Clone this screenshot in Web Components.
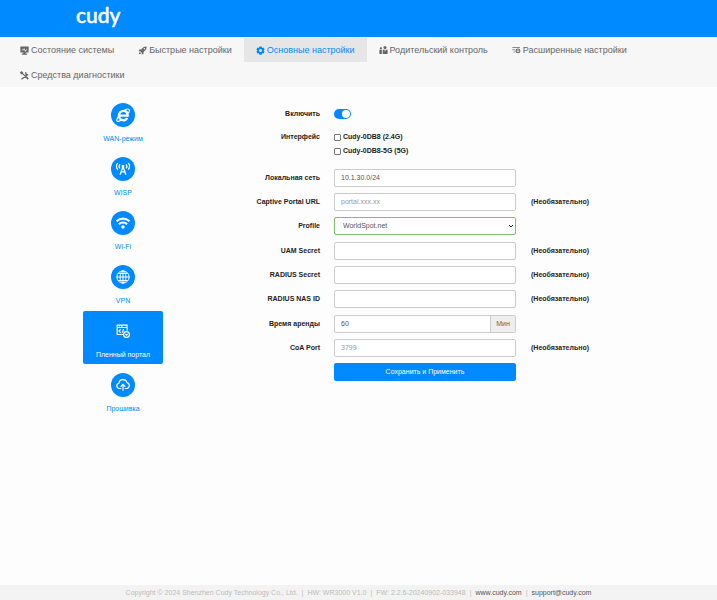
<!DOCTYPE html>
<html lang="ru">
<head>
<meta charset="utf-8">
<title>Cudy</title>
<style>
html { height: 100%; }
body { margin: 0; min-height: 100%; display: flex; flex-direction: column; background: #fdfdfd; color: #333; font: 7px/10px "Liberation Sans", Arial, sans-serif; --brand: #008aff; }
main { flex: 1; display: flex; box-sizing: border-box; width: 100%; max-width: 565px; margin: 0 auto; padding-top: 8px; }
settings-form { flex: 1; min-width: 0; }
</style>
</head>
<body>
<top-bar></top-bar>
<main-nav>
  <nav-item icon="monitor">Состояние системы</nav-item>
  <nav-item icon="rocket">Быстрые настройки</nav-item>
  <nav-item icon="gear" active>Основные настройки</nav-item>
  <nav-item icon="family">Родительский контроль</nav-item>
  <nav-item icon="advanced">Расширенные настройки</nav-item>
  <nav-item icon="tools">Средства диагностики</nav-item>
</main-nav>
<main>
  <side-menu>
    <side-item icon="browser">WAN-режим</side-item>
    <side-item icon="antenna">WISP</side-item>
    <side-item icon="wifi">Wi-Fi</side-item>
    <side-item icon="globe">VPN</side-item>
    <side-item icon="portal" active>Пленный портал</side-item>
    <side-item icon="cloud">Прошивка</side-item>
  </side-menu>
  <settings-form>
    <form-field slot="general" type="switch" label="Включить"></form-field>
    <form-field slot="general" type="checks" label="Интерфейс" options="Cudy-0DB8 (2.4G)|Cudy-0DB8-5G (5G)"></form-field>
    <form-field slot="network" label="Локальная сеть" value="10.1.30.0/24"></form-field>
    <form-field slot="network" label="Captive Portal URL" placeholder="portal.xxx.xx" hint="(Необязательно)"></form-field>
    <form-field slot="network" type="select" label="Profile" options="WorldSpot.net"></form-field>
    <form-field slot="radius" label="UAM Secret" hint="(Необязательно)"></form-field>
    <form-field slot="radius" label="RADIUS Secret" hint="(Необязательно)"></form-field>
    <form-field slot="radius" label="RADIUS NAS ID" hint="(Необязательно)"></form-field>
    <form-field slot="session" label="Время аренды" value="60" unit="Мин"></form-field>
    <form-field slot="session" label="CoA Port" placeholder="3799" hint="(Необязательно)"></form-field>
    <form-field slot="session" type="submit" value="Сохранить и Применить"></form-field>
  </settings-form>
</main>
<page-footer></page-footer>

<script>
const ICONS = {
  monitor: '<path fill="currentColor" fill-rule="evenodd" d="M1 1h22v16h-8v3h4v3H5v-3h4v-3H1zM5 9h4l2-4 3 7 2-3h3v2h-2l-3 4-3-6-1 2H5z"/>',
  rocket: '<path fill="currentColor" fill-rule="evenodd" d="M23 1c-7 0-11 3-14 8H4L1 14h5l4 4v5l5-3v-5c5-3 8-7 8-14zM17 5a2 2 0 1 1 0 4 2 2 0 0 1 0-4zM5 16l3 3-2 2-4 1 1-4z"/>',
  gear: '<path fill="currentColor" fill-rule="evenodd" d="M9 1h6l1 3 1 1 3-1 3 5-2 2v2l2 2-3 5-3-1-1 1-1 3H9l-1-3-1-1-3 1-3-5 2-2v-2L1 9l3-5 3 1 1-1zM12 8a4 4 0 1 0 0 8 4 4 0 0 0 0-8z"/>',
  family: '<g fill="currentColor"><circle cx="5" cy="6" r="3"/><circle cx="16" cy="4" r="4"/><path d="M1 10h7v11H1zM9 10h14v11H9z"/></g><path stroke="#f7f7f7" stroke-width="2" d="M8.500 9v12M16 10v4"/>',
  advanced: '<g fill="none" stroke="currentColor" stroke-width="2"><path d="M1 4h20M1 10h8M4 16h5"/><circle cx="16" cy="13" r="5" stroke-width="3"/><circle cx="16" cy="13" r="1"/></g>',
  tools: '<g fill="none" stroke="currentColor" stroke-width="3.500"><path d="M3 3l18 18M21 9L4 22M1 6l5-4M15 3l1 6 6 1"/></g><path fill="currentColor" d="M1 2l4-1 4 4-4 4-4-4zM15 15l3-1 5 6-3 3z"/>',
  browser: '<path fill="none" stroke="currentColor" stroke-width="4" d="M7 13h13c0-5-3-8-7-8-5 0-8 4-8 8s3 8 8 8c3 0 5-1 6-4"/><path fill="none" stroke="currentColor" stroke-width="2" d="M15 4c4-3 8-3 8 0 0 1 0 3-2 5M5 13c-4 6-5 10-2 10 2 0 4-1 6-2"/>',
  antenna: '<g fill="none" stroke="currentColor" stroke-width="2.200"><path d="M7 22l5-14 5 14M9 17h6M7 11c-2-2-2-5 0-7M17 11c2-2 2-5 0-7M3 13C0 9 0 5 3 2M21 13c3-4 3-8 0-11"/></g><circle cx="12" cy="7" r="2.500" fill="currentColor"/>',
  wifi: '<g fill="none" stroke="currentColor" stroke-width="3.500"><path d="M1 9c6-6 16-6 22 0M5 14c4-4 10-4 14 0"/></g><circle cx="12" cy="19" r="3" fill="currentColor"/>',
  globe: '<g fill="none" stroke="currentColor" stroke-width="1.700"><circle cx="12" cy="12" r="10.500"/><ellipse cx="12" cy="12" rx="5" ry="10.500"/><path d="M12 1v22M1 12h22M4 6h16M4 18h16"/></g>',
  portal: '<g fill="none" stroke="currentColor" stroke-width="2"><path d="M12 18H2V2h17v9M2 6h17M5 4h1M9 4h2M8 9l-3 3 3 3M13 9l-2 6"/><circle cx="18" cy="18" r="5"/><path d="M16 17l2 2 2-2"/></g>',
  cloud: '<g fill="none" stroke="currentColor" stroke-width="2"><path d="M9 18H6C0 17 0 10 5 9c1-8 12-8 14-1 5 1 5 9 0 10h-4M12 22V11M8 15l4-4 4 4"/></g>'
};
const icon = name => `<svg viewBox="0 0 24 24" aria-hidden="true">${ICONS[name]}</svg>`;

class TopBar extends HTMLElement {
  connectedCallback() {
    this.attachShadow({ mode: "open" }).innerHTML = `<style>
      :host { display: block; background: var(--brand); }
      .inner { max-width: 565px; margin: 0 auto; display: flex; }
      a { display: flex; }
      svg { width: 52px; height: 37px; }
      text { font: 500 21px Lato, sans-serif; fill: #fff; stroke: #fff; stroke-width: .5; stroke-linejoin: round; }
    </style>
    <header class="inner"><a href="#" aria-label="cudy"><svg viewBox="0 0 52 37"><text x="0" y="23">cudy</text></svg></a></header>`;
  }
}
customElements.define("top-bar", TopBar);

class MainNav extends HTMLElement {
  connectedCallback() {
    this.attachShadow({ mode: "open" }).innerHTML = `<style>
      :host { display: block; background: #f7f7f7; }
      nav { display: flex; flex-wrap: wrap; row-gap: 1px; padding: 1px 8px 0; }
    </style><nav><slot></slot></nav>`;
  }
}
customElements.define("main-nav", MainNav);

class NavItem extends HTMLElement {
  connectedCallback() {
    this.attachShadow({ mode: "open" }).innerHTML = `<style>
      :host { display: block; }
      a { display: flex; align-items: center; gap: 2px; padding: 0 12px; color: #666; font: 9px/24px "Liberation Sans", Arial, sans-serif; text-decoration: none; }
      :host([active]) a { background: #e6e6e6; color: var(--brand); }
      svg { width: 9px; height: 9px; }
    </style><a href="#">${icon(this.getAttribute("icon"))}<span><slot></slot></span></a>`;
  }
}
customElements.define("nav-item", NavItem);

class SideMenu extends HTMLElement {
  connectedCallback() {
    this.attachShadow({ mode: "open" }).innerHTML = `<style>
      :host { display: block; width: 80px; padding: 0 7px; }
      nav { display: flex; flex-direction: column; gap: 1px; }
    </style><nav><slot></slot></nav>`;
  }
}
customElements.define("side-menu", SideMenu);

class SideItem extends HTMLElement {
  connectedCallback() {
    this.attachShadow({ mode: "open" }).innerHTML = `<style>
      :host { display: block; }
      a { display: flex; flex-direction: column; align-items: center; gap: 7px; padding: 8px 0 4px; border-radius: 2px; color: var(--brand); text-decoration: none; }
      i { display: grid; place-items: center; width: 24px; height: 24px; border-radius: 50%; background: var(--brand); color: #fff; }
      svg { width: 14px; height: 14px; }
      :host([active]) a { background: var(--brand); color: #fff; }
    </style><a href="#"><i>${icon(this.getAttribute("icon"))}</i><span><slot></slot></span></a>`;
  }
}
customElements.define("side-item", SideItem);

class SettingsForm extends HTMLElement {
  connectedCallback() {
    this.attachShadow({ mode: "open" }).innerHTML = `<style>
      :host { display: block; padding-top: 10px; }
      form, .group { display: flex; flex-direction: column; }
      form { gap: 7px; }
      .group { gap: 6px; }
      .general { padding-bottom: 3px; }
    </style><form>
      <div class="group general"><slot name="general"></slot></div>
      <div class="group"><slot name="network"></slot></div>
      <div class="group"><slot name="radius"></slot></div>
      <div class="group"><slot name="session"></slot></div>
    </form>`;
  }
}
customElements.define("settings-form", SettingsForm);

class FormField extends HTMLElement {
  connectedCallback() {
    const get = name => this.getAttribute(name) || "";
    const type = get("type") || "text";
    const options = get("options").split("|");
    const caption = type === "submit" ? "<span></span>"
      : type === "checks" ? `<span class="label" id="caption">${get("label")}</span>`
      : `<label class="label" for="control">${get("label")}</label>`;
    const controls = {
      text: () => `<div class="box"><input id="control" type="text" value="${get("value")}" placeholder="${get("placeholder")}">${get("unit") ? `<span class="unit">${get("unit")}</span>` : ""}</div>`,
      select: () => `<div class="box select"><select id="control">${options.map(o => `<option>${o}</option>`).join("")}</select><svg viewBox="0 0 6 4" aria-hidden="true"><path d="M1 1l2 2 2-2" fill="none" stroke="#222"/></svg></div>`,
      switch: () => `<div class="toggle"><input id="control" type="checkbox" role="switch" checked></div>`,
      checks: () => `<div class="checks" role="group" aria-labelledby="caption">${options.map(o => `<label><input type="checkbox">${o}</label>`).join("")}</div>`,
      submit: () => `<button type="button">${get("value")}</button>`
    };
    this.attachShadow({ mode: "open" }).innerHTML = `<style>
      :host { display: grid; grid-template-columns: 150fr 182fr 111fr; column-gap: 14px; align-items: center; }
      * { box-sizing: border-box; }
      .label, .hint, .checks { font-weight: bold; color: #222; }
      .label { text-align: right; }
      .hint { padding-left: 1px; }
      input, select, button { font: inherit; margin: 0; }
      .box { display: flex; height: 18px; overflow: hidden; border: 1px solid #ccc; border-radius: 2px; background: #fff; }
      .box input, select { flex: 1; min-width: 0; border: 0; outline: 0; padding: 0 6px; background: none; color: #555; }
      ::placeholder { color: #999; opacity: 1; }
      .unit { display: grid; place-items: center; width: 25px; border-left: 1px solid #ccc; background: #eee; color: #666; }
      .select { position: relative; border-color: #7fbf70; }
      select { appearance: none; padding: 0 8px; }
      .select svg { position: absolute; right: 1px; top: 6px; width: 6px; height: 4px; }
      .toggle { display: flex; height: 18px; align-items: center; }
      .toggle input { appearance: none; display: flex; justify-content: flex-end; width: 17px; height: 10px; padding: 1px; border-radius: 5px; background: var(--brand); }
      .toggle input::before { content: ""; width: 8px; height: 8px; border-radius: 50%; background: #fff; }
      .checks { display: flex; flex-direction: column; gap: 4px; padding: 3px 0; }
      .checks label { display: flex; align-items: center; gap: 2px; }
      .checks input { appearance: none; width: 7px; height: 7px; border: 1px solid #767676; border-radius: 1px; background: #fff; }
      .checks input:checked { background: var(--brand); }
      :host([type="checks"]) { align-items: start; }
      :host([type="checks"]) .label { padding-top: 3px; }
      button { height: 18px; border: 0; border-radius: 2px; background: var(--brand); color: #fff; }
    </style>${caption}${controls[type]()}<span class="hint">${get("hint")}</span>`;
  }
}
customElements.define("form-field", FormField);

class PageFooter extends HTMLElement {
  connectedCallback() {
    this.attachShadow({ mode: "open" }).innerHTML = `<style>
      :host { display: block; background: #f3f3f3; color: #bbb; }
      footer { display: flex; flex-wrap: wrap; justify-content: center; gap: 0 4px; padding: 3px 0 2px; }
      a { color: #555; text-decoration: none; }
    </style><footer><span>Copyright © 2024 Shenzhen Cudy Technology Co., Ltd.</span><span>|</span><span>HW: WR3000 V1.0</span><span>|</span><span>FW: 2.2.6-20240902-033948</span><span>|</span><a href="https://www.cudy.com">www.cudy.com</a><span>|</span><a href="mailto:support@cudy.com">support@cudy.com</a></footer>`;
  }
}
customElements.define("page-footer", PageFooter);
</script>
</body>
</html>
